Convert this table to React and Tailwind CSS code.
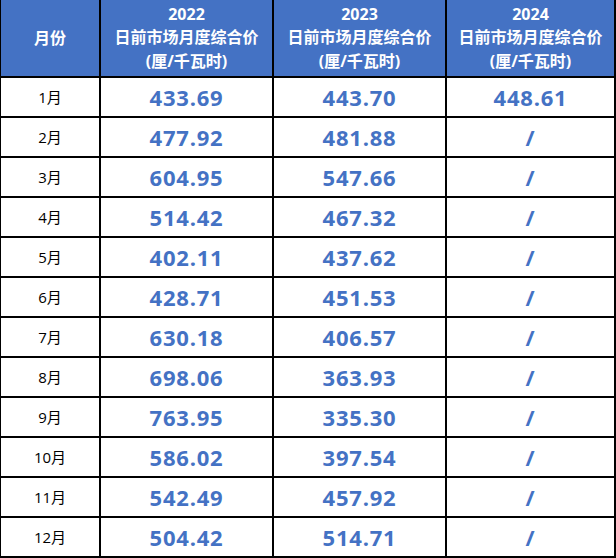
import React from "react";

const rows = [
  ["1月", "433.69", "443.70", "448.61"],
  ["2月", "477.92", "481.88", "/"],
  ["3月", "604.95", "547.66", "/"],
  ["4月", "514.42", "467.32", "/"],
  ["5月", "402.11", "437.62", "/"],
  ["6月", "428.71", "451.53", "/"],
  ["7月", "630.18", "406.57", "/"],
  ["8月", "698.06", "363.93", "/"],
  ["9月", "763.95", "335.30", "/"],
  ["10月", "586.02", "397.54", "/"],
  ["11月", "542.49", "457.92", "/"],
  ["12月", "504.42", "514.71", "/"],
];

const font = { fontFamily: "'Open Sans', 'Noto Sans CJK SC', sans-serif" };

function HeaderYear({ year }) {
  return (
    <div className="flex flex-col items-center justify-center border-r-2 border-b-2 border-black bg-[#4472C4] text-white font-bold text-[16px] leading-[23.5px]">
      <div>{year}</div>
      <div>日前市场月度综合价</div>
      <div>(厘/千瓦时)</div>
    </div>
  );
}

export default function App() {
  return (
    <div className="w-[616px] h-[558px] bg-white border-l border-black" style={font}>
      <div className="grid grid-cols-[100px_173px_173px_169px] grid-rows-[78px_repeat(12,40px)]">
        <div className="flex items-center justify-center border-r-2 border-b-2 border-black bg-[#4472C4] text-white font-bold text-[16px]">
          月份
        </div>
        <HeaderYear year="2022" />
        <HeaderYear year="2023" />
        <HeaderYear year="2024" />
        {rows.map((r) => (
          <React.Fragment key={r[0]}>
            <div className="flex items-center justify-center border-r-2 border-b-2 border-black text-[15px] text-black">
              {r[0]}
            </div>
            {r.slice(1).map((v, i) => (
              <div
                key={i}
                className="flex items-center justify-center border-r-2 border-b-2 border-black text-[22px] font-bold tracking-[0.8px] text-[#4472C4]"
              >
                {v}
              </div>
            ))}
          </React.Fragment>
        ))}
      </div>
    </div>
  );
}
